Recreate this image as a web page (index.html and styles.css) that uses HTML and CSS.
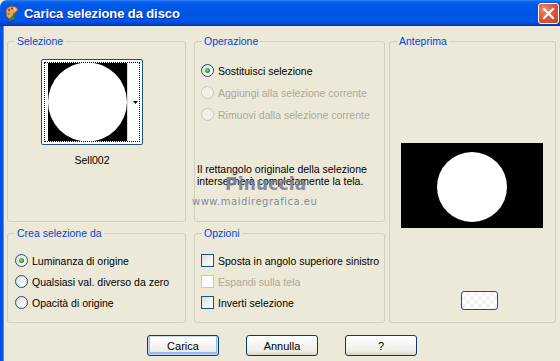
FILE: index.html
```html
<!DOCTYPE html>
<html lang="it">
<head>
<meta charset="utf-8">
<title>Carica selezione da disco</title>
<link rel="stylesheet" href="styles.css">
</head>
<body>
<div class="window">
  <div class="titlebar">
    <svg class="app-icon" width="16" height="16" viewBox="0 0 16 16">
      <path d="M2 6 C2 2 8 0 12 2 C15 4 14 8 11 8 C9 8 9 10 10 12 C11 15 6 15 4 13 C2 11 2 9 2 6 Z" fill="#E8A55A" stroke="#8A4A1A" stroke-width="0.8"/>
      <circle cx="5" cy="5" r="1.2" fill="#E03020"/>
      <circle cx="8" cy="3.6" r="1.1" fill="#2060E0"/>
      <circle cx="11" cy="4.4" r="1.1" fill="#F8E040"/>
      <circle cx="4.6" cy="9" r="1.1" fill="#30A030"/>
      <path d="M6 15 L13 7" stroke="#3A7A2A" stroke-width="2.2" stroke-linecap="round"/>
      <path d="M12.5 7.5 L15 5" stroke="#2050C0" stroke-width="1.6" stroke-linecap="round"/>
    </svg>
    <span class="title">Carica selezione da disco</span>
    <span class="close">
      <svg width="13" height="13" viewBox="0 0 13 13"><path d="M2 2 L11 11 M11 2 L2 11" stroke="#fff" stroke-width="2.2" stroke-linecap="square"/></svg>
    </span>
  </div>
  <div class="client">
    <div class="groups">
      <fieldset class="group g-sel">
        <legend>Selezione</legend>
        <div class="sel-body">
          <div class="thumb">
            <div class="thumb-focus">
              <svg width="94" height="78" viewBox="0 0 94 78">
                <rect x="3" y="0" width="79" height="78" fill="#000"/>
                <circle cx="42.5" cy="39" r="39.5" fill="#fff"/>
                <rect x="82" y="0" width="1" height="78" fill="#d8d8d8"/>
                <path d="M88 38 L93 38 L90.5 41 Z" fill="#000"/>
              </svg>
            </div>
          </div>
          <div class="thumb-name">Sell002</div>
        </div>
      </fieldset>

      <fieldset class="group g-op">
        <legend>Operazione</legend>
        <div class="op-body">
          <div class="opt"><span class="radio on"></span><span>Sostituisci selezione</span></div>
          <div class="opt disabled"><span class="radio"></span><span>Aggiungi alla selezione corrente</span></div>
          <div class="opt disabled"><span class="radio"></span><span>Rimuovi dalla selezione corrente</span></div>
          <p class="desc">Il rettangolo originale della selezione intersecherà completamente la tela.</p>
        </div>
      </fieldset>

      <fieldset class="group g-prev">
        <legend>Anteprima</legend>
        <div class="prev-body">
          <div class="preview">
            <svg width="142" height="85" viewBox="0 0 142 85">
              <rect width="142" height="85" fill="#000"/>
              <circle cx="71" cy="44" r="35" fill="#fff"/>
            </svg>
          </div>
          <span class="mini-btn"></span>
        </div>
      </fieldset>

      <fieldset class="group g-crea">
        <legend>Crea selezione da</legend>
        <div class="list-body">
          <div class="opt"><span class="radio on"></span><span>Luminanza di origine</span></div>
          <div class="opt"><span class="radio"></span><span>Qualsiasi val. diverso da zero</span></div>
          <div class="opt"><span class="radio"></span><span>Opacità di origine</span></div>
        </div>
      </fieldset>

      <fieldset class="group g-opz">
        <legend>Opzioni</legend>
        <div class="list-body">
          <div class="opt"><span class="check"></span><span>Sposta in angolo superiore sinistro</span></div>
          <div class="opt disabled"><span class="check"></span><span>Espandi sulla tela</span></div>
          <div class="opt"><span class="check"></span><span>Inverti selezione</span></div>
        </div>
      </fieldset>
    </div>

    <div class="buttons">
      <button class="btn default">Carica</button>
      <button class="btn">Annulla</button>
      <button class="btn">?</button>
    </div>

    <div class="watermark">
      <span class="wm-name">Pinuccia</span>
      <span class="wm-url">www.maidiregrafica.eu</span>
    </div>
  </div>
</div>
</body>
</html>
```

FILE: styles.css
```css
* { box-sizing: border-box; }

html, body {
  margin: 0;
  padding: 0;
  background: #ECE9D8;
}

body {
  width: 560px;
  height: 361px;
  overflow: hidden;
  font-family: "Liberation Sans", Arial, sans-serif;
  font-size: 10.5px;
  color: #000;
}

.window {
  width: 560px;
  height: 361px;
  display: flex;
  flex-direction: column;
}

/* ---------- title bar ---------- */
.titlebar {
  height: 26px;
  flex: none;
  display: flex;
  align-items: center;
  padding-left: 4px;
  background: linear-gradient(to bottom,
    #2E82F2 0px, #0A61EC 2px, #0058E8 5px, #0054E3 14px,
    #0057E8 20px, #0049D8 23px, #003CB8 25px, #0034A8 26px);
  border-top-left-radius: 7px;
  position: relative;
}

.app-icon { flex: none; margin-top: -1px; }

.title {
  margin-left: 4px;
  font-family: "Liberation Sans", Arial, sans-serif;
  font-weight: bold;
  font-size: 13px;
  letter-spacing: -0.1px;
  color: #fff;
  text-shadow: 1px 1px 0 #0B2B9C;
}

.close {
  position: absolute;
  left: 538px;
  top: 3px;
  width: 21px;
  height: 21px;
  border: 1px solid #fff;
  border-radius: 3px;
  background: radial-gradient(circle at 30% 30%, #F08C6C 0, #E0583A 45%, #C8401E 100%);
  display: flex;
  align-items: center;
  justify-content: center;
}

/* ---------- client area ---------- */
.client {
  flex: 1;
  position: relative;
  border-left: 3px solid #0A50E0;
  box-shadow: inset 1px 0 0 #4E8CF0;
  padding: 9px 0 0 4px;
}

.groups {
  display: grid;
  grid-template-columns: 179px 8px 191px 4px 167px;
  grid-template-rows: 187px 5px 96px;
}

.group {
  margin: 0;
  padding: 0;
  min-width: 0;
  border: 1px solid #D0D0BF;
  border-radius: 3px;
}

.group legend {
  margin-left: 7px;
  padding: 0 2px;
  line-height: 13px;
  color: #0046D5;
}

.g-sel  { grid-column: 1; grid-row: 1; }
.g-op   { grid-column: 3; grid-row: 1; }
.g-prev { grid-column: 5; grid-row: 1 / 4; }
.g-crea { grid-column: 1; grid-row: 3; }
.g-opz  { grid-column: 3; grid-row: 3; }

/* Selezione */
.sel-body {
  padding: 11px 0 0 33px;
  display: flex;
  flex-direction: column;
  align-items: flex-start;
}

.thumb {
  width: 102px;
  height: 86px;
  border: 1px solid #1C5180;
  border-radius: 2px;
  padding: 2px;
  background: #fff;
}

.thumb-focus {
  width: 96px;
  height: 80px;
  border: 1px dotted #000;
}

.thumb-focus svg { display: block; }

.thumb-name {
  width: 102px;
  text-align: center;
  margin-top: 9px;
  line-height: 12px;
}

/* radios & checks */
.opt {
  display: flex;
  align-items: center;
  gap: 4px;
  height: 15px;
  white-space: nowrap;
}

.opt.disabled { color: #ACA899; }

.radio {
  flex: none;
  width: 13px;
  height: 13px;
  border-radius: 50%;
  border: 1px solid #1C5180;
  background: linear-gradient(135deg, #DCDCD7 0%, #F4F4F1 60%, #FFFFFF 100%);
  position: relative;
}

.radio.on::after {
  content: "";
  position: absolute;
  left: 3px;
  top: 3px;
  width: 5px;
  height: 5px;
  border-radius: 50%;
  background: radial-gradient(circle at 40% 40%, #8FE28F 0, #21A121 55%, #187A18 100%);
}

.disabled .radio {
  border-color: #CAC8BB;
  background: #F2F0E6;
}

.check {
  flex: none;
  width: 13px;
  height: 13px;
  border: 1px solid #1C5180;
  background: linear-gradient(135deg, #DCDCD7 0%, #F4F4F1 60%, #FFFFFF 100%);
}

.disabled .check {
  border-color: #CAC8BB;
  background: #FFFFFF;
}

/* Operazione */
.op-body {
  padding: 15px 0 0 6px;
  display: flex;
  flex-direction: column;
  gap: 7px;
}

.desc {
  margin: 34px 0 0 -4px;
  line-height: 12px;
  width: 185px;
}

/* Anteprima */
.prev-body {
  padding: 95px 0 0 11px;
  display: flex;
  flex-direction: column;
  align-items: flex-start;
}

.preview svg { display: block; }

.mini-btn {
  margin: 63px 0 0 60px;
  width: 37px;
  height: 19px;
  border: 1px solid #1C5180;
  border-radius: 3px;
  background:
    conic-gradient(#F2F2F2 25%, #FFFFFF 0 50%, #F2F2F2 0 75%, #FFFFFF 0) 0 0 / 8px 8px,
    #fff;
}

/* Crea / Opzioni lists */
.list-body {
  padding: 13px 0 0 7px;
  display: flex;
  flex-direction: column;
  gap: 6px;
}

.g-crea .list-body { padding-left: 7px; }
.g-opz .list-body { padding-left: 6px; }

/* buttons */
.buttons {
  display: flex;
  gap: 27px;
  margin: 12px 0 0 140px;
}

.btn {
  width: 72px;
  height: 21px;
  padding: 0;
  font-family: "Liberation Sans", Arial, sans-serif;
  font-size: 11px;
  color: #000;
  border: 1px solid #003C74;
  border-radius: 3px;
  background: linear-gradient(to bottom, #FFFFFF 0%, #F7F7F4 40%, #EEEDE7 80%, #D8D2C6 100%);
}

.btn.default {
  box-shadow: inset 0 0 0 1px #C9DAF9, inset 0 -1px 0 2px #98B8F0;
}

/* watermark overlay */
.watermark {
  position: absolute;
  left: 189px;
  top: 149px;
  display: flex;
  flex-direction: column;
  align-items: flex-start;
  pointer-events: none;
}

.wm-name {
  margin-left: 33px;
  font-family: "DejaVu Sans", sans-serif;
  font-weight: bold;
  font-size: 17px;
  line-height: 18px;
  color: rgba(118, 124, 150, 0.9);
  letter-spacing: 0.2px;
}

.wm-url {
  margin-top: 3px;
  font-family: "DejaVu Sans", sans-serif;
  font-size: 10px;
  line-height: 11px;
  letter-spacing: 0.5px;
  color: rgba(118, 124, 150, 0.9);
}
```
